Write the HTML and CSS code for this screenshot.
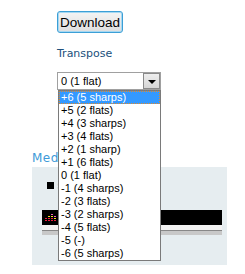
FILE: index.html
```html
<!DOCTYPE html>
<html lang="en">
<head>
  <meta charset="UTF-8">
  <title>Transpose</title>
  <link rel="stylesheet" href="styles.css">
</head>
<body>
  <div class="page">
    <div class="controls">
      <button class="download" type="button">Download</button>
      <div class="label">Transpose</div>
      <div class="select">
        <span class="value">0 (1 flat)</span>
        <span class="arrow"></span>
        <ul class="options">
          <li class="active">+6 (5 sharps)</li>
          <li>+5 (2 flats)</li>
          <li>+4 (3 sharps)</li>
          <li>+3 (4 flats)</li>
          <li>+2 (1 sharp)</li>
          <li>+1 (6 flats)</li>
          <li>0 (1 flat)</li>
          <li>-1 (4 sharps)</li>
          <li>-2 (3 flats)</li>
          <li>-3 (2 sharps)</li>
          <li>-4 (5 flats)</li>
          <li>-5 (-)</li>
          <li>-6 (5 sharps)</li>
        </ul>
      </div>
    </div>

    <div class="media">
      <div class="media-title">Media</div>
      <div class="panel">
        <div class="track"><span class="bullet"></span><span class="track-name">score.mid</span></div>
        <div class="player">
          <div class="screen">
            <svg class="eq" width="11" height="7" viewBox="0 0 11 7">
              <rect x="0" y="4" width="2" height="1" fill="#e81c3c"/>
              <rect x="0" y="6" width="2" height="1" fill="#e81c3c"/>
              <rect x="3" y="2" width="2" height="1" fill="#f0e020"/>
              <rect x="3" y="4" width="2" height="1" fill="#e81c3c"/>
              <rect x="3" y="6" width="2" height="1" fill="#e81c3c"/>
              <rect x="6" y="0" width="2" height="1" fill="#f060c0"/>
              <rect x="6" y="2" width="2" height="1" fill="#f0e020"/>
              <rect x="6" y="4" width="2" height="1" fill="#e81c3c"/>
              <rect x="6" y="6" width="2" height="1" fill="#e81c3c"/>
              <rect x="9" y="2" width="2" height="1" fill="#f060c0"/>
              <rect x="9" y="4" width="2" height="1" fill="#f0e020"/>
              <rect x="9" y="6" width="2" height="1" fill="#e81c3c"/>
            </svg>
          </div>
          <div class="bar-top"></div>
          <div class="bar"></div>
        </div>
      </div>
    </div>
  </div>
</body>
</html>
```

FILE: styles.css
```css
body {
  margin: 0;
  background: #fff;
  font-family: 'Liberation Sans', Arial, sans-serif;
}
.page {
  padding: 11px 0 0 32px;
}
.controls {
  padding-left: 25px;
}
.download {
  display: block;
  width: 66px;
  height: 22px;
  padding: 0;
  margin: 0;
  font-family: 'Liberation Sans', Arial, sans-serif;
  font-size: 13.5px;
  color: #000;
  border: 1px solid #3c9fd6;
  border-radius: 3px;
  background: linear-gradient(#f4f4f4, #dedede);
  box-shadow: inset 0 0 0 1px #a6d8f2;
}
.label {
  margin-top: 14px;
  font-family: 'DejaVu Sans', Verdana, sans-serif;
  font-size: 11px;
  line-height: 13px;
  color: #20507c;
}
.select {
  position: relative;
  margin-top: 12px;
  width: 102px;
  height: 16px;
  border: 1px solid #a0a0a0;
  background: #fff;
  font-size: 11px;
  line-height: 16px;
}
.value {
  padding-left: 3px;
}
.arrow {
  position: absolute;
  top: 0;
  right: 0;
  width: 15px;
  height: 14px;
  border: 1px solid #8a8a8a;
  background: linear-gradient(#eeeeee, #d6d6d6);
}
.arrow::after {
  content: "";
  position: absolute;
  left: 4px;
  top: 6px;
  border-left: 4px solid transparent;
  border-right: 4px solid transparent;
  border-top: 4px solid #000;
}
.options {
  position: absolute;
  top: 17px;
  left: 0;
  z-index: 2;
  width: 101px;
  margin: 0;
  padding: 0;
  list-style: none;
  background: #fff;
  border: 1px solid #7a7a7a;
}
.options li {
  height: 13px;
  padding-left: 2px;
  line-height: 13px;
  font-size: 11px;
  white-space: nowrap;
}
.options li.active {
  background: #3399ff;
  color: #fff;
  outline: 1px dotted #e08a2c;
  outline-offset: -1px;
}
.media {
  margin-top: 61px;
}
.media-title {
  font-family: 'DejaVu Sans', Verdana, sans-serif;
  font-size: 12px;
  letter-spacing: 0.5px;
  line-height: 14px;
  color: #3d9ad8;
}
.panel {
  margin-top: 2px;
  width: 195px;
  height: 98px;
  background: #e6edf0;
  padding-top: 15px;
  box-sizing: border-box;
}
.track {
  display: flex;
  align-items: center;
  gap: 3px;
  padding-left: 15px;
  height: 7px;
  font-size: 10px;
  color: #cfd6d9;
}
.bullet {
  width: 7px;
  height: 7px;
  background: #000;
}
.player {
  margin: 21px 0 0 10px;
  width: 180px;
}
.screen {
  height: 15px;
  background: #000;
  padding: 4px 0 0 3px;
  box-sizing: border-box;
}
.eq {
  display: block;
}
.bar-top {
  height: 5px;
  background: #f2f2f2;
  border-bottom: 1px solid #888;
}
.bar {
  height: 4px;
  background: #c8c8c8;
}
```
